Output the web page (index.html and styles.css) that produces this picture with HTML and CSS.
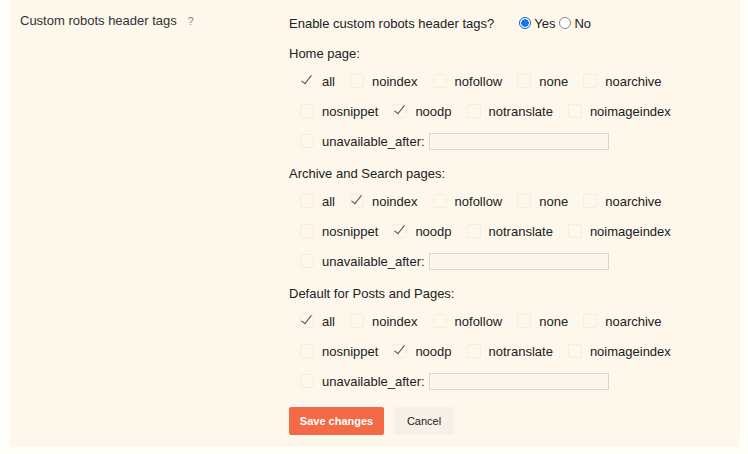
FILE: index.html
```html
<!DOCTYPE html>
<html lang="en">

<head>
    <meta charset="UTF-8">
    <title>Custom robots header tags</title>
    <link rel="stylesheet" href="styles.css">
</head>

<body>

    <div class="settings">
        <div class="setting-label">
            Custom robots header tags <span class="help">?</span>
        </div>

        <div class="setting-body">
            <div class="enable-row">
                <span>Enable custom robots header tags?</span>
                <span class="radios">
                    <span class="radio on"></span>Yes
                    <span class="radio"></span>No
                </span>
            </div>

            <div class="group">
                <div class="group-title">Home page:</div>
                <div class="row">
                    <span class="item"><span class="box plain checked"></span>all</span>
                    <span class="item"><span class="box"></span>noindex</span>
                    <span class="item"><span class="box"></span>nofollow</span>
                    <span class="item"><span class="box"></span>none</span>
                    <span class="item"><span class="box"></span>noarchive</span>
                </div>
                <div class="row">
                    <span class="item"><span class="box"></span>nosnippet</span>
                    <span class="item"><span class="box checked"></span>noodp</span>
                    <span class="item"><span class="box"></span>notranslate</span>
                    <span class="item"><span class="box"></span>noimageindex</span>
                </div>
                <div class="row">
                    <span class="item"><span class="box"></span>unavailable_after:</span>
                    <input class="date-input" type="text">
                </div>
            </div>

            <div class="group">
                <div class="group-title">Archive and Search pages:</div>
                <div class="row">
                    <span class="item"><span class="box"></span>all</span>
                    <span class="item"><span class="box checked"></span>noindex</span>
                    <span class="item"><span class="box"></span>nofollow</span>
                    <span class="item"><span class="box"></span>none</span>
                    <span class="item"><span class="box"></span>noarchive</span>
                </div>
                <div class="row">
                    <span class="item"><span class="box"></span>nosnippet</span>
                    <span class="item"><span class="box checked"></span>noodp</span>
                    <span class="item"><span class="box"></span>notranslate</span>
                    <span class="item"><span class="box"></span>noimageindex</span>
                </div>
                <div class="row">
                    <span class="item"><span class="box"></span>unavailable_after:</span>
                    <input class="date-input" type="text">
                </div>
            </div>

            <div class="group">
                <div class="group-title">Default for Posts and Pages:</div>
                <div class="row">
                    <span class="item"><span class="box checked"></span>all</span>
                    <span class="item"><span class="box"></span>noindex</span>
                    <span class="item"><span class="box"></span>nofollow</span>
                    <span class="item"><span class="box"></span>none</span>
                    <span class="item"><span class="box"></span>noarchive</span>
                </div>
                <div class="row">
                    <span class="item"><span class="box"></span>nosnippet</span>
                    <span class="item"><span class="box checked"></span>noodp</span>
                    <span class="item"><span class="box"></span>notranslate</span>
                    <span class="item"><span class="box"></span>noimageindex</span>
                </div>
                <div class="row">
                    <span class="item"><span class="box"></span>unavailable_after:</span>
                    <input class="date-input" type="text">
                </div>
            </div>

            <div class="actions">
                <button class="btn btn-save">Save changes</button>
                <button class="btn btn-cancel">Cancel</button>
            </div>
        </div>
    </div>

</body>

</html>
```

FILE: styles.css
```css
/* Robots header tags settings */
body {
    margin: 0;
    background-color: #fffffa;
    font-family: "Liberation Sans", Arial, sans-serif;
    font-size: 13px;
    color: #222;
}

.settings {
    display: flex;
    width: 730px;
    height: 447px;
    margin-left: 10px;
    background-color: #fdf7ec;
}

.setting-label {
    width: 269px;
    padding: 13px 0 0 10px;
    color: #333;
}

.help {
    margin-left: 7px;
    font-size: 11px;
    color: #6f8aa3;
}

.setting-body {
    flex: 1;
}

.enable-row {
    display: flex;
    align-items: center;
    height: 20px;
    margin-top: 13px;
    padding-bottom: 3px;
}

.radios {
    display: flex;
    align-items: center;
    margin-left: 25px;
}

.radio {
    width: 10px;
    height: 10px;
    margin-right: 3px;
    border: 1px solid #8a8a8a;
    border-radius: 50%;
    background-color: #fff;
}

.radios .radio:nth-child(2) {
    margin-left: 4px;
}

.radio.on {
    border-color: #0a66d0;
    background: radial-gradient(circle, #1a73e8 0 3.5px, #fff 4px);
}

.group {
    margin-top: 8px;
}

.group-title {
    height: 20px;
    line-height: 20px;
}

.row {
    display: flex;
    align-items: center;
    height: 30px;
    padding-left: 11px;
}

.group-title + .row {
    margin-top: 2px;
}

.item {
    display: flex;
    align-items: center;
    margin-right: 15px;
}

.box {
    position: relative;
    width: 12px;
    height: 12px;
    margin-right: 8px;
    border: 1px solid #f3ede2;
    border-radius: 2px;
}

.box.plain {
    border-color: transparent;
}

.box.checked::after {
    content: "";
    position: absolute;
    left: 3px;
    top: -2px;
    width: 4px;
    height: 10px;
    border: solid #4a4a4a;
    border-width: 0 1.5px 1.5px 0;
    transform: rotate(38deg);
}

.date-input {
    width: 178px;
    height: 15px;
    margin-left: -11px;
    padding: 0;
    border: 1px solid #ddd6ca;
    background-color: #fbf6ee;
}

.actions {
    display: flex;
    gap: 10px;
    margin-top: 11px;
}

.btn {
    height: 28px;
    border: none;
    border-radius: 2px;
    font-family: "Liberation Sans", Arial, sans-serif;
    font-size: 11px;
    cursor: pointer;
}

.btn-save {
    width: 95px;
    background-color: #f26a46;
    color: #fff;
    font-weight: bold;
}

.btn-cancel {
    width: 60px;
    background-color: #f6f0e8;
    color: #222;
}
```
